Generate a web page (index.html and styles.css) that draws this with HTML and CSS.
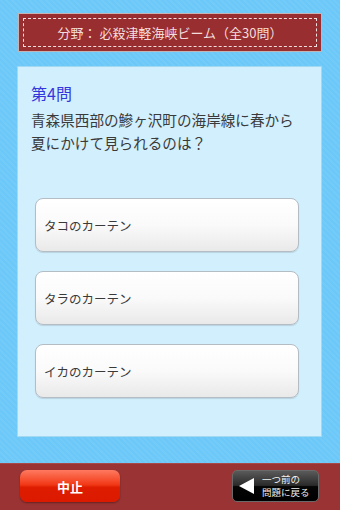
FILE: index.html
```html
<!DOCTYPE html>
<html lang="ja">
<head>
  <meta charset="UTF-8">
  <title>クイズ</title>
  <link rel="stylesheet" href="styles.css">
</head>
<body>

<div class="screen">
  <div class="genre">
    <div class="genre-inner">分野： 必殺津軽海峡ビーム（全30問）</div>
  </div>

  <div class="card">
    <div class="q-no">第4問</div>
    <div class="q-text">青森県西部の鰺ヶ沢町の海岸線に春から<br>夏にかけて見られるのは？</div>

    <div class="choices">
      <button class="choice">タコのカーテン</button>
      <button class="choice">タラのカーテン</button>
      <button class="choice">イカのカーテン</button>
    </div>
  </div>

  <div class="footer">
    <button class="stop-btn">中止</button>
    <button class="back-btn">
      <span class="arrow"></span>
      <span class="back-label">
        <span class="back-line">一つ前の</span>
        <span class="back-line">問題に戻る</span>
      </span>
    </button>
  </div>
</div>

</body>
</html>
```

FILE: styles.css
```css
body {
  margin: 0;
  font-family: "Noto Sans CJK JP", "Noto Sans", sans-serif;
  color: #3a3a3a;
}

.screen {
  width: 340px;
  height: 510px;
  display: flex;
  flex-direction: column;
  background-color: #6cc8f8;
  background-image: repeating-linear-gradient(45deg, rgba(255,255,255,0.05) 0 2px, rgba(255,255,255,0) 2px 4px);
  overflow: hidden;
}

.genre {
  margin: 13px 18px 0 18px;
  height: 39px;
  box-sizing: border-box;
  background: #992e30;
  border: 1px solid #c4b4b6;
  padding: 4px;
}

.genre-inner {
  height: 100%;
  box-sizing: border-box;
  border: 1px dashed #f2dede;
  display: flex;
  align-items: center;
  justify-content: center;
  color: #f3dcdc;
  font-size: 13px;
}

.card {
  margin: 14px 18px 0 17px;
  height: 371px;
  box-sizing: border-box;
  background: #d2effd;
  border: 1px solid #a2d8f2;
  padding: 16px 14px 0 13px;
}

.q-no {
  color: #3535dd;
  font-size: 16px;
  line-height: 20px;
}

.q-text {
  margin-top: 5px;
  font-size: 14.6px;
  line-height: 23px;
  color: #3a3a3a;
}

.choices {
  margin: 44px 8px 0 4px;
  display: flex;
  flex-direction: column;
  gap: 19px;
}

.choice {
  height: 54px;
  box-sizing: border-box;
  text-align: left;
  padding: 0 0 0 8px;
  font-family: inherit;
  font-size: 12.5px;
  color: #3a3a3a;
  background: linear-gradient(to bottom, #ffffff 0%, #fafafa 50%, #e9e9e9 100%);
  border: 1px solid #b4bcc4;
  border-radius: 8px;
  box-shadow: 0 1px 1px rgba(0, 0, 0, 0.12);
}

.footer {
  margin-top: auto;
  height: 47px;
  box-sizing: border-box;
  background: #9a3434;
  border-top: 1px solid #a84a4a;
  display: flex;
  align-items: center;
  justify-content: space-between;
  padding: 0 21px 2px 20px;
}

.stop-btn {
  width: 100px;
  height: 32px;
  border: none;
  border-radius: 7px;
  background: linear-gradient(to bottom, #ff7a60 0%, #f23a18 45%, #dd1c00 55%, #dc1a00 100%);
  box-shadow: 0 1px 2px rgba(0, 0, 0, 0.35);
  color: #fff;
  font-family: inherit;
  font-weight: bold;
  font-size: 13px;
}

.back-btn {
  width: 87px;
  height: 32px;
  box-sizing: border-box;
  border: 1px solid #6a6a6a;
  border-radius: 5px;
  background: linear-gradient(to bottom, #5a5a5a 0%, #2a2a2a 48%, #050505 52%, #000 100%);
  display: flex;
  align-items: center;
  padding: 0 0 0 6px;
  gap: 8px;
  color: #fff;
  font-family: inherit;
}

.arrow {
  width: 0;
  height: 0;
  border-top: 8px solid transparent;
  border-bottom: 8px solid transparent;
  border-right: 15px solid #fff;
}

.back-label {
  display: flex;
  flex-direction: column;
  text-align: left;
  color: #f0f0f0;
}

.back-line {
  display: block;
  font-size: 9.5px;
  line-height: 13px;
  height: 13px;
}
```
